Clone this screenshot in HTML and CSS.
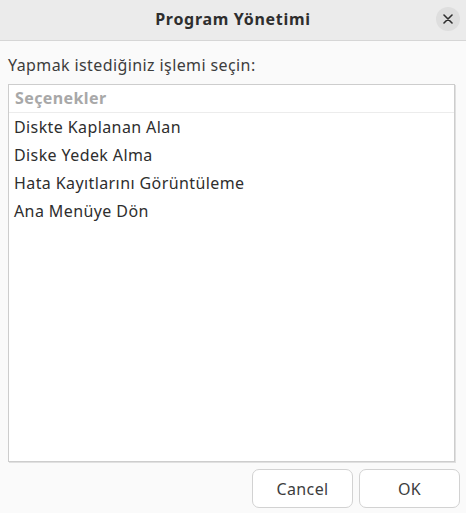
FILE: index.html
```html
<!DOCTYPE html>
<html lang="tr">
<head>
<meta charset="utf-8">
<link rel="stylesheet" href="styles.css">
</head>
<body>
<div class="dialog">
  <header class="titlebar">
    <span class="title">Program Yönetimi</span>
    <button class="close" aria-label="Kapat">
      <svg width="10" height="10" viewBox="0 0 10 10"><path d="M1 1L9 9M9 1L1 9" stroke="#2e2e2e" stroke-width="1.6" stroke-linecap="round"/></svg>
    </button>
  </header>
  <main class="content">
    <div class="prompt">Yapmak istediğiniz işlemi seçin:</div>
    <div class="list">
      <div class="list-header">Seçenekler</div>
      <div class="row">Diskte Kaplanan Alan</div>
      <div class="row">Diske Yedek Alma</div>
      <div class="row">Hata Kayıtlarını Görüntüleme</div>
      <div class="row">Ana Menüye Dön</div>
    </div>
  </main>
  <footer class="actions">
    <button class="btn">Cancel</button>
    <button class="btn">OK</button>
  </footer>
</div>
</body>
</html>
```

FILE: styles.css
```css
html, body {
  margin: 0;
  padding: 0;
}
body {
  width: 466px;
  height: 513px;
  background: #fafafa;
  font-family: "Noto Sans", "DejaVu Sans", sans-serif;
  font-size: 16px;
  letter-spacing: 0.4px;
  color: #3d3d3d;
  overflow: hidden;
}
.dialog {
  display: flex;
  flex-direction: column;
  height: 513px;
}
.titlebar {
  height: 41px;
  box-sizing: border-box;
  background: #ebebeb;
  border-bottom: 1px solid #d6d6d6;
  display: flex;
  align-items: center;
  justify-content: center;
  position: relative;
}
.title {
  font-weight: bold;
  font-size: 16px;
  letter-spacing: 0.7px;
  color: #2e2e2e;
  margin-top: -2px;
}
.close {
  position: absolute;
  right: 6px;
  top: 7px;
  width: 24px;
  height: 24px;
  border-radius: 50%;
  border: none;
  background: #dedede;
  padding: 0;
  display: flex;
  align-items: center;
  justify-content: center;
}
.content {
  flex: 1;
  display: flex;
  flex-direction: column;
  padding: 13px 11px 0 8px;
}
.prompt {
  color: #3d3d3d;
  line-height: 22px;
  margin-bottom: 8px;
}
.list {
  height: 378px;
  box-sizing: border-box;
  background: #ffffff;
  border: 1px solid #cdcdcd;
  box-shadow: 1px 1px 0 #e0e0e0;
}
.list-header {
  height: 28px;
  box-sizing: border-box;
  border-bottom: 1px solid #ececec;
  padding: 2px 0 0 6px;
  font-weight: bold;
  color: #a8a8a8;
}
.row {
  height: 28px;
  line-height: 28px;
  padding-left: 5px;
  color: #2e2e2e;
}
.actions {
  display: flex;
  justify-content: flex-end;
  gap: 6px;
  padding: 0 6px 5px 0;
}
.btn {
  width: 101px;
  height: 39px;
  box-sizing: border-box;
  border: 1px solid #d2d2d2;
  border-radius: 7px;
  background: #ffffff;
  font-family: inherit;
  font-size: 16px;
  letter-spacing: 0.4px;
  color: #3d3d3d;
}
```
